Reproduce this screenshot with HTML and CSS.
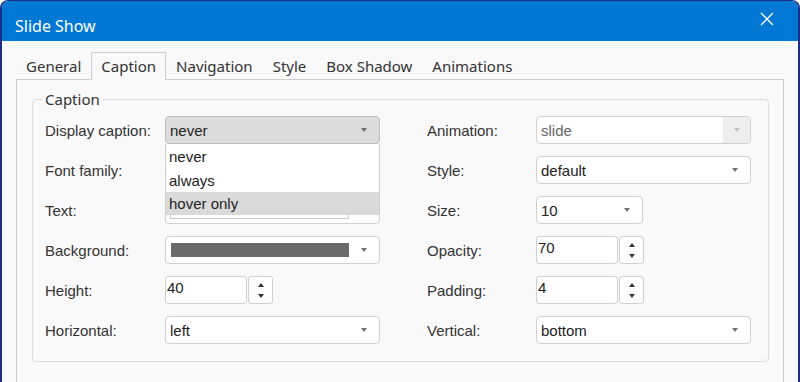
FILE: index.html
```html
<!DOCTYPE html>
<html>
<head>
<meta charset="utf-8">
<title>Slide Show</title>
<link rel="stylesheet" href="styles.css">
</head>
<body>
<div class="window">
  <div class="titlebar">
    <span class="title">Slide Show</span>
    <svg class="close" width="14" height="14" viewBox="0 0 14 14"><path d="M1 1L13 13M13 1L1 13" stroke="#ffffff" stroke-width="1.3" fill="none"/></svg>
  </div>
  <div class="tabs">
    <span class="tab">General</span>
    <span class="tab active">Caption</span>
    <span class="tab">Navigation</span>
    <span class="tab">Style</span>
    <span class="tab">Box Shadow</span>
    <span class="tab">Animations</span>
  </div>
  <div class="panel">
    <fieldset class="group">
      <legend>Caption</legend>
      <div class="form">
        <div class="col">
          <div class="row">
            <span class="label">Display caption:</span>
            <div class="field select open">
              <span>never</span><i class="arrow"></i>
              <ul class="list">
                <li>never</li>
                <li>always</li>
                <li class="hl">hover only</li>
              </ul>
            </div>
          </div>
          <div class="row">
            <span class="label">Font family:</span>
            <div class="field select"><span></span><i class="arrow"></i></div>
          </div>
          <div class="row">
            <span class="label">Text:</span>
            <div class="field textwrap"><div class="inner"></div></div>
          </div>
          <div class="row">
            <span class="label">Background:</span>
            <div class="field select color"><span class="swatch"></span><i class="arrow"></i></div>
          </div>
          <div class="row">
            <span class="label">Height:</span>
            <div class="number"><span class="num">40</span><span class="spin"><i class="up"></i><i class="down"></i></span></div>
          </div>
          <div class="row">
            <span class="label">Horizontal:</span>
            <div class="field select"><span>left</span><i class="arrow"></i></div>
          </div>
        </div>
        <div class="col right">
          <div class="row">
            <span class="label">Animation:</span>
            <div class="field select disabled"><span>slide</span><span class="btn"><i class="arrow"></i></span></div>
          </div>
          <div class="row">
            <span class="label">Style:</span>
            <div class="field select"><span>default</span><i class="arrow"></i></div>
          </div>
          <div class="row">
            <span class="label">Size:</span>
            <div class="field select small"><span>10</span><i class="arrow"></i></div>
          </div>
          <div class="row">
            <span class="label">Opacity:</span>
            <div class="number"><span class="num">70</span><span class="spin"><i class="up"></i><i class="down"></i></span></div>
          </div>
          <div class="row">
            <span class="label">Padding:</span>
            <div class="number"><span class="num">4</span><span class="spin"><i class="up"></i><i class="down"></i></span></div>
          </div>
          <div class="row">
            <span class="label">Vertical:</span>
            <div class="field select"><span>bottom</span><i class="arrow"></i></div>
          </div>
        </div>
      </div>
    </fieldset>
  </div>
</div>
</body>
</html>
```

FILE: styles.css
```css
html, body {
  margin: 0;
  padding: 0;
  background: #ffffff;
}

.window {
  box-sizing: border-box;
  width: 800px;
  height: 382px;
  overflow: hidden;
  background: #f9f9f9;
  border: 2px solid #1b2f86;
  border-top-width: 1px;
  border-bottom: none;
  border-radius: 8px 8px 0 0;
  font-family: "Noto Sans", "Open Sans", sans-serif;
}

.titlebar {
  height: 40px;
  background: #0078d4;
  display: flex;
  justify-content: space-between;
  align-items: flex-start;
}

.title {
  color: #ffffff;
  font-size: 16px;
  line-height: 22px;
  margin: 14px 0 0 13px;
}

.close {
  margin: 11px 24px 0 0;
}

.tabs {
  display: flex;
  margin: 11px 0 0 14px;
  height: 27px;
}

.tab {
  box-sizing: border-box;
  padding: 0 9px;
  height: 27px;
  line-height: 26px;
  font-size: 15px;
  color: #333333;
  border: 1px solid transparent;
  border-bottom: none;
}

.tab.active {
  border-color: #cccccc;
  background: #f9f9f9;
  height: 28px;
  position: relative;
  z-index: 1;
}

.panel {
  margin-left: 14px;
  width: 768px;
  height: 320px;
  box-sizing: border-box;
  border: 1px solid #cccccc;
  border-bottom: none;
  padding-top: 9px;
}

.group {
  margin: 0 0 0 15px;
  width: 737px;
  box-sizing: border-box;
  border: 1px solid #dcdcdc;
  border-radius: 4px;
  padding: 7px 16px 17px 12px;
}

.group legend {
  font-size: 15px;
  line-height: 20px;
  color: #333333;
  padding: 0 3px;
  margin-left: -3px;
}

.form {
  display: flex;
  gap: 47px;
  font-family: "Liberation Sans", Arial, sans-serif;
  font-size: 15px;
}

.col {
  display: flex;
  flex-direction: column;
  gap: 12px;
}

.row {
  display: flex;
  align-items: center;
  height: 28px;
}

.label {
  width: 120px;
  color: #333333;
}

.right .label {
  width: 109px;
}

.field {
  box-sizing: border-box;
  width: 215px;
  height: 28px;
  border: 1px solid #d0d0d0;
  border-radius: 4px;
  background: #ffffff;
  color: #222222;
}

.select {
  position: relative;
  display: flex;
  align-items: center;
  justify-content: space-between;
  padding: 0 12px 0 4px;
}

.arrow {
  width: 0;
  height: 0;
  border-left: 3px solid transparent;
  border-right: 3px solid transparent;
  border-top: 4px solid #707070;
}

.select.open {
  background: #dcdcdc;
  border-color: #bdbdbd;
}

.list {
  position: absolute;
  top: calc(100% + 1px);
  left: -1px;
  right: -1px;
  margin: 0;
  padding: 0;
  list-style: none;
  background: #ffffff;
  border-left: 1px solid #cfcfcf;
  border-right: 1px solid #cfcfcf;
  z-index: 2;
}

.list li {
  height: 24px;
  line-height: 26px;
  padding-left: 3px;
  color: #222222;
}

.list li.hl {
  height: 23px;
  line-height: 24px;
  background: #dadada;
}

.textwrap {
  padding: 5px 0 0 4px;
}

.textwrap .inner {
  width: 179px;
  height: 17px;
  border: 1px solid #c8c8c8;
  box-sizing: border-box;
}

.color {
  padding-left: 5px;
}

.swatch {
  width: 178px;
  height: 14px;
  background: #6a6a6a;
}

.small {
  width: 107px;
}

.disabled {
  color: #666666;
  padding-right: 0;
  overflow: hidden;
}

.disabled .btn {
  width: 27px;
  align-self: stretch;
  background: #eeeeee;
  display: flex;
  align-items: center;
  justify-content: center;
}

.disabled .arrow {
  border-top-color: #c0c0c0;
}

.number {
  display: flex;
  height: 28px;
}

.num {
  box-sizing: border-box;
  width: 82px;
  height: 28px;
  border: 1px solid #d0d0d0;
  border-radius: 3px;
  background: #ffffff;
  color: #222222;
  padding: 2px 0 0 1px;
}

.spin {
  box-sizing: border-box;
  width: 25px;
  height: 28px;
  margin-left: 1px;
  border: 1px solid #d0d0d0;
  border-radius: 3px;
  background: #ffffff;
  display: flex;
  flex-direction: column;
  align-items: center;
  justify-content: center;
  gap: 7px;
}

.up, .down {
  width: 0;
  height: 0;
  border-left: 3px solid transparent;
  border-right: 3px solid transparent;
}

.up {
  border-bottom: 4px solid #333333;
}

.down {
  border-top: 4px solid #333333;
}
```
